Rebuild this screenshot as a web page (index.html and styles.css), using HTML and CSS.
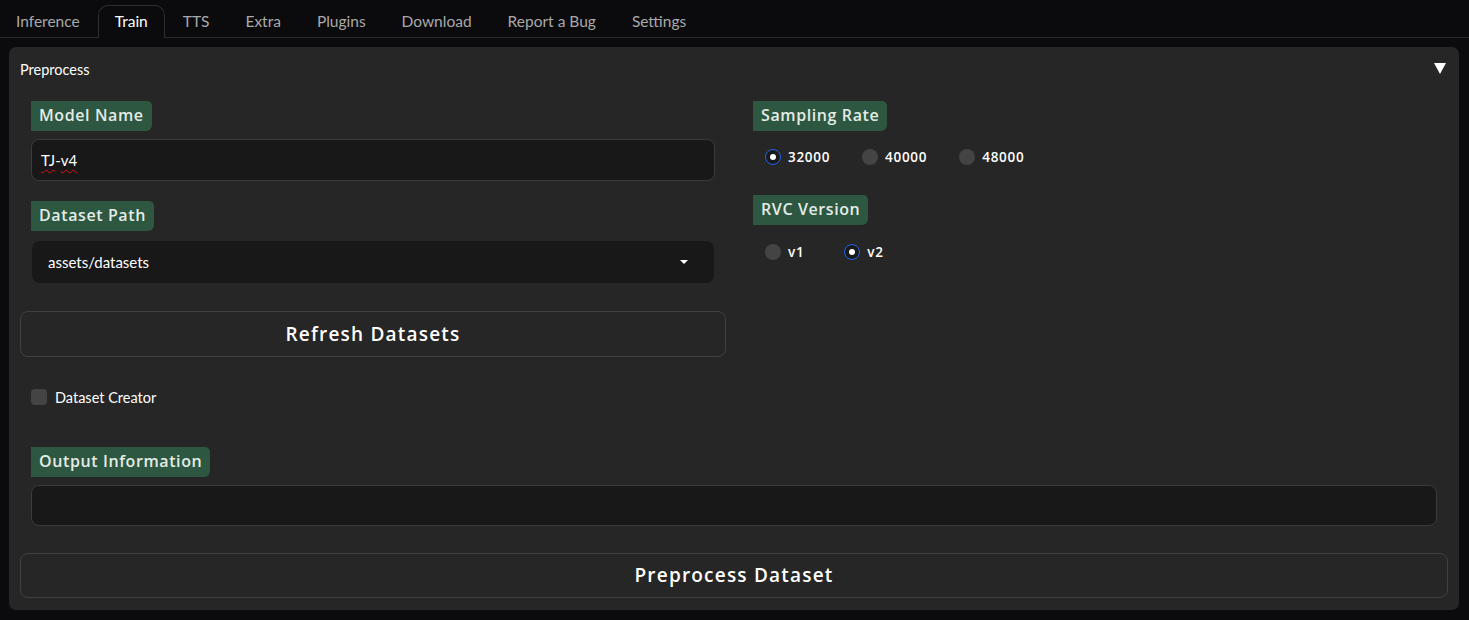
FILE: index.html
```html
<!DOCTYPE html>
<html>
<head>
<meta charset="utf-8">
<link rel="stylesheet" href="styles.css">
</head>
<body>
<nav class="tabs">
  <span class="tab">Inference</span>
  <span class="tab active">Train</span>
  <span class="tab">TTS</span>
  <span class="tab">Extra</span>
  <span class="tab">Plugins</span>
  <span class="tab">Download</span>
  <span class="tab">Report a Bug</span>
  <span class="tab">Settings</span>
</nav>
<section class="panel">
  <div class="panel-head">
    <span>Preprocess</span>
    <span class="caret"></span>
  </div>
  <div class="grid">
    <div class="col">
      <div class="label">Model Name</div>
      <div class="input"><span class="typo">TJ</span>-<span class="typo">v4</span></div>
      <div class="label mt20">Dataset Path</div>
      <div class="dropdown">
        <span>assets/datasets</span>
        <span class="dd-arrow"></span>
      </div>
      <button class="btn refresh">Refresh Datasets</button>
      <label class="check"><span class="box"></span>Dataset Creator</label>
    </div>
    <div class="col right">
      <div class="label">Sampling Rate</div>
      <div class="radios r1">
        <span class="radio"><span class="dot on"></span>32000</span>
        <span class="radio"><span class="dot"></span>40000</span>
        <span class="radio"><span class="dot"></span>48000</span>
      </div>
      <div class="label rvc">RVC Version</div>
      <div class="radios r2">
        <span class="radio"><span class="dot"></span>v1</span>
        <span class="radio"><span class="dot on"></span>v2</span>
      </div>
    </div>
  </div>
  <div class="label out-label">Output Information</div>
  <div class="input wide"></div>
  <button class="btn preprocess">Preprocess Dataset</button>
</section>
</body>
</html>
```
FILE: styles.css
```css
* { box-sizing: border-box; }
html, body { margin: 0; padding: 0; }
body {
  background: #0b0b0d;
  color: #fff;
  font-family: "Lato", "Liberation Sans", sans-serif;
  width: 1469px;
  height: 620px;
  overflow: hidden;
}
.tabs {
  display: flex;
  align-items: flex-end;
  height: 38px;
  border-bottom: 1px solid #2a2a2a;
}
.tab {
  font-size: 15.5px;
  color: #a9a9a9;
  padding: 2px 17px 8px 15px;
  height: 33px;
  line-height: 26px;
  border: 1px solid transparent;
  border-bottom: none;
  margin-bottom: -1px;
}
.tab + .tab { padding-left: 17px; }
.tab.active {
  color: #fff;
  border-color: #2e2e2e;
  border-radius: 10px 10px 0 0;
  background: #0b0b0d;
  padding: 2px 16px 8px 16px;
}
.panel {
  margin: 9px 10px 0 9px;
  background: #262626;
  border-radius: 7px;
  padding: 0 11px 12px 11px;
  height: 563px;
  display: flex;
  flex-direction: column;
}
.panel-head {
  height: 46px;
  display: flex;
  align-items: center;
  justify-content: space-between;
  font-size: 14.5px;
  padding-right: 2px;
}
.caret {
  width: 0; height: 0;
  border-left: 6px solid transparent;
  border-right: 6px solid transparent;
  border-top: 11px solid #fff;
  margin-top: -2px;
}
.grid {
  margin-top: 9px;
  display: grid;
  grid-template-columns: 706px 706px;
  gap: 16px;
}
.col { display: flex; flex-direction: column; align-items: flex-start; }
.label {
  background: #2d5741;
  color: #e3ece6;
  font-family: "Open Sans", "Liberation Sans", sans-serif;
  font-weight: 600;
  font-size: 16px;
  height: 30px;
  line-height: 29px;
  padding: 0 8px;
  border-radius: 0 5px 6px 0;
  margin-left: 11px;
  letter-spacing: 0.6px;
}
.mt20 { margin-top: 20px; }
.input {
  margin: 8px 11px 0 11px;
  align-self: stretch;
  height: 42px;
  background: #181818;
  border: 1px solid #3b3b3b;
  border-radius: 8px;
  font-size: 15px;
  padding: 0 9px;
  line-height: 40px;
  color: #fff;
}
.typo {
  text-decoration: underline wavy #d11;
  text-decoration-thickness: 1px;
  text-underline-offset: 3px;
}
.dropdown {
  margin: 10px 12px 0 12px;
  align-self: stretch;
  height: 42px;
  background: #181818;
  border-radius: 8px;
  display: flex;
  align-items: center;
  justify-content: space-between;
  padding: 0 26px 0 16px;
  font-size: 15px;
}
.dd-arrow {
  width: 0; height: 0;
  border-left: 4px solid transparent;
  border-right: 4px solid transparent;
  border-top: 4px solid #fff;
}
.btn {
  display: block;
  align-self: stretch;
  background: #262626;
  border: 1px solid #404040;
  border-radius: 8px;
  color: #fff;
  font-family: "Open Sans", "Liberation Sans", sans-serif;
  font-weight: 600;
  font-size: 19px;
  letter-spacing: 1.2px;
  height: 46px;
  padding: 0;
}
.refresh { margin-top: 28px; }
.check {
  margin: 31px 0 0 11px;
  display: flex;
  align-items: center;
  font-size: 14.5px;
  gap: 8px;
  height: 18px;
}
.box {
  width: 16px; height: 16px;
  background: #444;
  border-radius: 4px;
}
.radios {
  display: flex;
  margin-left: 23px;
  font-family: "Open Sans", "Liberation Sans", sans-serif;
  font-weight: 600;
  font-size: 13.5px;
  letter-spacing: 0.7px;
  height: 24px;
  align-items: center;
}
.r1 { margin-top: 14px; gap: 32px; }
.r2 { margin-top: 15px; gap: 40px; }
.radio { display: flex; align-items: center; gap: 7px; }
.dot {
  width: 16px; height: 16px;
  border-radius: 50%;
  background: #444;
  position: relative;
}
.dot.on {
  background: #1a1a1a;
  border: 1.5px solid #2563eb;
}
.dot.on::after {
  content: "";
  position: absolute;
  left: 50%; top: 50%;
  width: 6px; height: 6px;
  margin: -3px 0 0 -3px;
  background: #fff;
  border-radius: 50%;
}
.rvc { margin-top: 26px; }
.out-label { margin-top: 41px; align-self: flex-start; }
.wide { margin: 8px 11px 0 11px; }
.preprocess { margin-top: 27px; }
```
